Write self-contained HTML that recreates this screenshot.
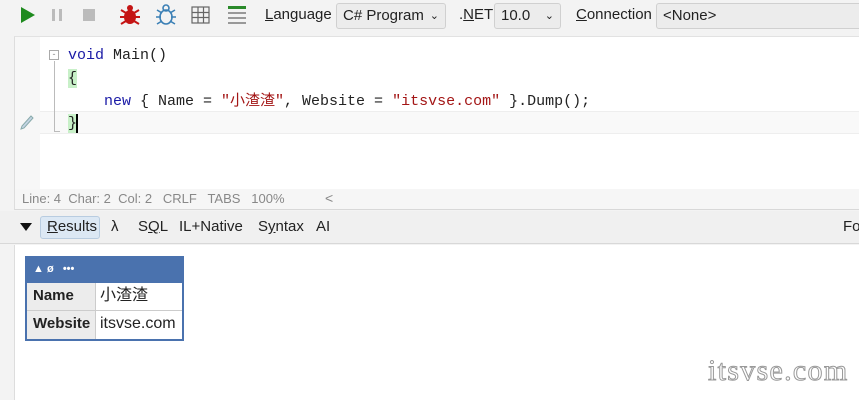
<!DOCTYPE html>
<html><head><meta charset="utf-8"><style>
*{margin:0;padding:0;box-sizing:border-box}
body{width:859px;height:400px;overflow:hidden;background:#f3f3f3;font-family:"Liberation Sans","Noto Sans CJK SC",sans-serif;font-size:15px;color:#222;position:relative}
.abs{position:absolute}
.mono{font-family:"Liberation Mono","Noto Sans CJK SC",monospace;font-size:15px;line-height:19px}
.combo{position:absolute;top:3px;height:26px;border:1px solid #d0d0d0;border-radius:3px;background:#ececec;padding:3px 6px;font-size:15px}
u{text-decoration:underline}
.row{display:flex;height:28px;line-height:26px}
.k{width:69px;background:#ececec;font-weight:bold;font-size:15px;padding:0 6px;border-right:1px solid #ccc}
.v{padding:0 4px;font-size:16px}
</style></head><body>
<svg class="abs" style="left:0;top:0" width="250" height="32">
<polygon points="21,7 35,15 21,23" fill="#1e8a1e"/>
<rect x="52" y="9" width="3" height="12" fill="#bbb"/><rect x="59" y="9" width="3" height="12" fill="#bbb"/>
<rect x="83" y="9" width="12" height="12" fill="#bbb"/>
<g fill="#c41414"><ellipse cx="130" cy="17" rx="6" ry="7"/><circle cx="130" cy="8" r="3"/><path d="M121 10l5 3M139 10l-5 3M120 17h5M140 17h-5M121 24l5-3M139 24l-5-3" stroke="#c41414" stroke-width="2"/></g>
<g fill="none" stroke="#3a7fb5" stroke-width="1.6"><ellipse cx="166" cy="17" rx="6" ry="7"/><circle cx="166" cy="8" r="3"/><path d="M157 10l5 3M175 10l-5 3M156 17h5M176 17h-5M157 24l5-3M175 24l-5-3"/></g>
<g fill="none" stroke="#666" stroke-width="1.2"><rect x="192" y="7" width="17" height="16"/><path d="M192 12.5h17M192 17.5h17M198 7v16M203.5 7v16"/></g>
<rect x="228" y="6" width="18" height="3" fill="#2a8a2a"/><rect x="228" y="12" width="18" height="2" fill="#999"/><rect x="228" y="17" width="18" height="2" fill="#999"/><rect x="228" y="22" width="18" height="2" fill="#999"/>
</svg>
<div class="abs" style="left:265px;top:6px"><u>L</u>anguage</div>
<div class="combo" style="left:336px;width:110px">C# Program <span style="float:right;font-size:11px;margin-top:2px">&#8964;</span></div>
<div class="abs" style="left:459px;top:6px">.<u>N</u>ET</div>
<div class="combo" style="left:494px;width:67px">10.0 <span style="float:right;font-size:11px;margin-top:2px">&#8964;</span></div>
<div class="abs" style="left:576px;top:6px"><u>C</u>onnection</div>
<div class="combo" style="left:656px;width:210px">&lt;None&gt;</div>
<div class="abs" style="left:14px;top:36px;width:845px;height:153px;background:#fff;border-left:1px solid #ddd;border-top:1px solid #e2e2e2"></div>
<div class="abs" style="left:15px;top:37px;width:25px;height:152px;background:#f7f7f7"></div>
<div class="abs" style="left:40px;top:111px;width:819px;height:23px;background:#f9f9f9;border-top:1px solid #eee;border-bottom:1px solid #eee"></div>
<div class="abs" style="left:49px;top:50px;width:10px;height:10px;border:1px solid #aaa;font-size:9px;line-height:7px;text-align:center;color:#888">-</div>
<div class="abs" style="left:54px;top:61px;width:1px;height:70px;background:#bbb"></div>
<div class="abs" style="left:54px;top:131px;width:6px;height:1px;background:#bbb"></div>
<svg class="abs" style="left:18px;top:114px" width="18" height="18"><path d="M3 15l3-1 9-10-2-2-9 10z" fill="#c4d4e4" stroke="#8aa" stroke-width="1"/></svg>
<div class="abs mono" style="left:68px;top:46px;white-space:pre"><span style="color:#1a1aa6">void</span> Main()</div>
<div class="abs mono" style="left:68px;top:69px;background:#c8f0c8;width:9px;height:19px">{</div>
<div class="abs mono" style="left:104px;top:92px;white-space:pre"><span style="color:#1a1aa6">new</span> { Name = <span style="color:#a31515">"小渣渣"</span>, Website = <span style="color:#a31515">"itsvse.com"</span> }.Dump();</div>
<div class="abs mono" style="left:68px;top:114px;background:#c8f0c8;width:9px;height:19px">}</div>
<div class="abs" style="left:76px;top:114px;width:2px;height:19px;background:#000"></div>
<div class="abs" style="left:14px;top:189px;width:845px;height:21px;background:#f6f6f6;border-left:1px solid #ddd;border-bottom:1px solid #d8d8d8"></div>
<div class="abs" style="left:22px;top:191px;font-size:13px;color:#888">Line: 4&nbsp; Char: 2&nbsp; Col: 2&nbsp;&nbsp; CRLF&nbsp;&nbsp; TABS&nbsp;&nbsp; 100%</div>
<div class="abs" style="left:325px;top:190px;font-size:14px;color:#888">&lt;</div>
<div class="abs" style="left:0;top:211px;width:859px;height:33px;background:#f0f0f0;border-bottom:1px solid #d8d8d8"></div>
<svg class="abs" style="left:20px;top:222px" width="12" height="10"><polygon points="0,1 12,1 6,9" fill="#111"/></svg>
<div class="abs" style="left:40px;top:216px;width:60px;height:23px;background:#dce8f4;border:1px solid #b8cce0;border-radius:3px"></div>
<div class="abs" style="left:47px;top:218px"><u>R</u>esults</div>
<div class="abs" style="left:111px;top:218px">λ</div>
<div class="abs" style="left:138px;top:218px">S<u>Q</u>L</div>
<div class="abs" style="left:179px;top:218px">IL+Native</div>
<div class="abs" style="left:258px;top:218px">S<u>y</u>ntax</div>
<div class="abs" style="left:316px;top:218px">AI</div>
<div class="abs" style="left:843px;top:218px">Fo</div>
<div class="abs" style="left:14px;top:245px;width:845px;height:155px;background:#fff;border-left:1px solid #ddd"></div>
<div class="abs" style="left:25px;top:256px;width:159px;height:85px;border:2px solid #4a72ae;background:#fff">
<div style="height:25px;background:#4a72ae;color:#fff;font-size:11px;font-weight:bold;padding:5px 6px">▲ ø&nbsp;&nbsp; •••</div>
<div class="row" style="border-bottom:1px solid #ccc"><div class="k">Name</div><div class="v">小渣渣</div></div>
<div class="row"><div class="k">Website</div><div class="v">itsvse.com</div></div>
</div>
<div class="abs" style="left:708px;top:354px;font-family:'Liberation Serif',serif;font-size:30px;color:#fff;-webkit-text-stroke:1px #999;letter-spacing:1.3px">itsvse.com</div>
</body></html>
